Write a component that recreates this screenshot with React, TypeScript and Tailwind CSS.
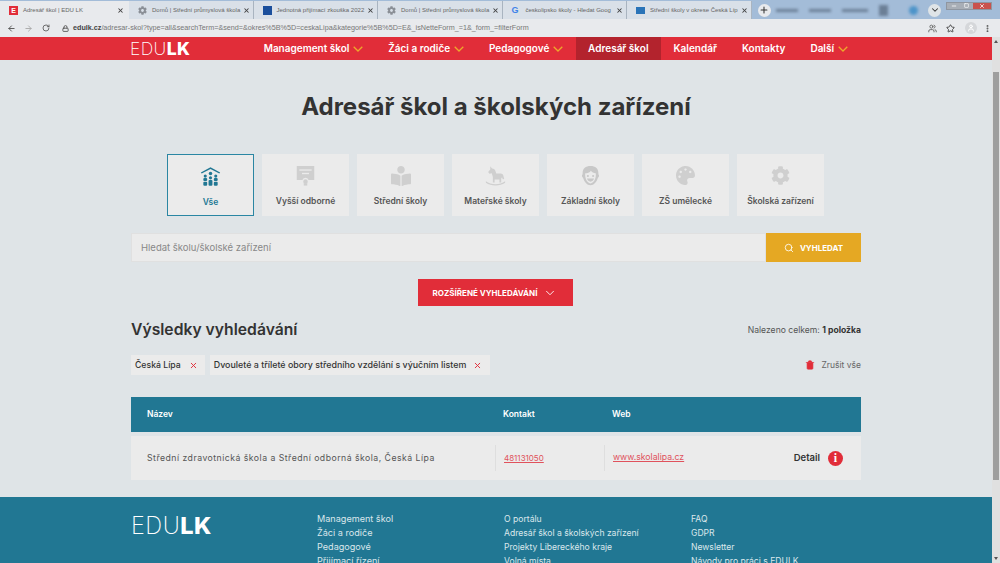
import React from 'react';
import { ArrowLeft, ArrowRight, RotateCw, Lock, Star, X, Plus, ChevronDown, Search, Trash2, MoreVertical, User, Minus, Square, Users } from 'lucide-react';
import { FaPalette, FaCog, FaBookReader } from 'react-icons/fa';

const tabs = [
  { title: 'Adresář škol | EDU LK', icon: 'e', active: true },
  { title: 'Domů | Střední průmyslová škola', icon: 'gear' },
  { title: 'Jednotná přijímací zkouška 2022', icon: 'blue' },
  { title: 'Domů | Střední průmyslová škola', icon: 'gear' },
  { title: 'českolipsko školy - Hledat Goog', icon: 'g' },
  { title: 'Střední školy v okrese Česká Líp', icon: 'sk' },
];

const navItems = [
  { label: 'Management škol', arrow: true },
  { label: 'Žáci a rodiče', arrow: true },
  { label: 'Pedagogové', arrow: true },
  { label: 'Adresář škol', active: true },
  { label: 'Kalendář' },
  { label: 'Kontakty' },
  { label: 'Další', arrow: true },
];

function HouseIcon() {
  return (
    <svg viewBox="0 0 24 24" className="h-[21px] w-[21px]" fill="#217793">
      <path d="M12 1.500 1 7.400l.9 1.300L12 3.500l10.100 5.200.9-1.300z" />
      <circle cx="12" cy="8.500" r="2" />
      <circle cx="6" cy="11.500" r="1.800" />
      <circle cx="18" cy="11.500" r="1.800" />
      <circle cx="12" cy="13.500" r="1.800" />
      <rect x="3.800" y="13.800" width="4.400" height="3.400" rx="1.200" />
      <rect x="15.800" y="13.800" width="4.400" height="3.400" rx="1.200" />
      <rect x="3.800" y="18" width="4.400" height="4.500" rx="1.200" />
      <rect x="9.800" y="16" width="4.400" height="6.500" rx="1.200" />
      <rect x="15.800" y="18" width="4.400" height="4.500" rx="1.200" />
    </svg>
  );
}

function CertificateIcon() {
  return (
    <svg viewBox="0 0 24 24" className="h-[21px] w-[21px]" fill="#cfcfcf">
      <path d="M2 1h20v16h-6.500a3.800 3.800 0 0 0-7 0H2z" />
      <rect x="5" y="5" width="14" height="1.500" fill="#ebebeb" />
      <rect x="8" y="9" width="8" height="1.500" fill="#ebebeb" />
      <circle cx="12" cy="19" r="2.600" />
      <path d="M10 21h4v2.500h-4z" />
    </svg>
  );
}

function HorseIcon() {
  return (
    <svg viewBox="0 0 24 24" className="h-[21px] w-[21px]" fill="#cfcfcf">
      <path d="M6 1.500 8 4c2.200.2 3.400 1.200 4 3l.8 2.600h5c2 0 3.200 1.200 3.400 3.400l.8 3-1.700.4-.8-2.400-1 1.400V20h-2v-3.500H11V20H9v-6.200L7.700 9.500l-2.700.5L3.600 8l2.400-3z" />
      <path d="M1 18.500c6 4.600 16 4.600 22 0v1.800c-6 4-16 4-22 0z" />
    </svg>
  );
}

function FaceIcon() {
  return (
    <svg viewBox="0 0 24 24" className="h-[21px] w-[21px]" fill="#c8c8c8">
      <path d="M12 1C6.500 1 3 4 3 9v1.500C1.800 11 2 14 3.500 14.500 5 19.500 8 23 12 23s7-3.500 8.500-8.500C22 14 22.200 11 21 10.500V9c0-5-3.500-8-9-8zM6 9.500c2.500 0 5-1 6.500-3 1 1.600 3 2.800 5.500 3 .8 5-2 11.500-6 11.500S5.300 14.500 6 9.500z" />
      <circle cx="9" cy="12.500" r="1.200" />
      <circle cx="15" cy="12.500" r="1.200" />
      <path d="M8 15.500h8c-.5 2.200-2 3.500-4 3.500s-3.500-1.300-4-3.500z" />
    </svg>
  );
}

const categories = [
  { label: 'Vše', icon: <HouseIcon />, active: true },
  { label: 'Vyšší odborné', icon: <CertificateIcon /> },
  { label: 'Střední školy', icon: <FaBookReader className="h-[20px] w-[20px] text-[#cfcfcf]" /> },
  { label: 'Mateřské školy', icon: <HorseIcon /> },
  { label: 'Základní školy', icon: <FaceIcon /> },
  { label: 'ZŠ umělecké', icon: <FaPalette className="h-[19px] w-[19px] text-[#cfcfcf]" /> },
  { label: 'Školská zařízení', icon: <FaCog className="h-[19px] w-[19px] text-[#cfcfcf]" /> },
];

const footerCols = [
  { width: 'w-[187px] text-[9.100px]', items: ['Management škol', 'Žáci a rodiče', 'Pedagogové', 'Přijímací řízení'] },
  { width: 'w-[187px] text-[8.600px]', items: ['O portálu', 'Adresář škol a školských zařízení', 'Projekty Libereckého kraje', 'Volná místa'] },
  { width: 'text-[8.600px]', items: ['FAQ', 'GDPR', 'Newsletter', 'Návody pro práci s EDULK'] },
];

function Favicon({ type }: { type: string }) {
  if (type === 'e') {
    return <span className="flex h-[9px] w-[9px] shrink-0 items-center justify-center bg-[#e12d39] text-[7px] font-bold leading-none text-white">E</span>;
  }
  if (type === 'gear') return <FaCog className="h-[9px] w-[9px] shrink-0 text-[#8a8f96]" />;
  if (type === 'blue') return <span className="h-[9px] w-[9px] shrink-0 bg-[#1b4f9c]" />;
  if (type === 'g') return <span className="w-[9px] shrink-0 text-[9px] font-bold leading-none text-[#3f83e8]">G</span>;
  return <span className="h-[7px] w-[9px] shrink-0 bg-[#2a74b8]" />;
}

function Logo({ size }: { size: string }) {
  return (
    <span className={`${size} leading-none tracking-[0.02em] text-white`}>
      <span className="font-extralight">EDU</span>
      <span className="font-extrabold">LK</span>
    </span>
  );
}

function Chevron() {
  return (
    <svg viewBox="0 0 10 6" className="ml-[3.800px] h-[6px] w-[10px]" fill="none" stroke="#eda92b" strokeWidth="1.300">
      <path d="M.7.8 5 5 9.300.8" />
    </svg>
  );
}

export default function App() {
  return (
    <div className="flex h-[563px] w-[1000px] flex-col overflow-hidden bg-[#dfe4e7] font-['Inter',sans-serif]">
      {/* browser */}
      <div className="flex h-[19px] items-end bg-[#a3bcd8] font-['Liberation_Sans',sans-serif]">
        {tabs.map((t) => (
          <div
            key={t.title + t.icon}
            className={`flex h-[18px] shrink-0 items-center pl-[9px] ${t.active ? 'w-[129px] bg-[#e8eaed] pr-[5px]' : 'w-[124.500px] border-r border-[#a9b4c0] bg-[#d9e0e8] pr-[3px]'}`}
          >
            <Favicon type={t.icon} />
            <span className="ml-[5px] min-w-0 flex-1 whitespace-nowrap text-[6px] text-[#666]">{t.title}</span>
            <X className="h-[7px] w-[7px] shrink-0 text-[#444]" strokeWidth={3.500} />
          </div>
        ))}
        <div className="ml-[6px] flex h-[18px] flex-1 items-center">
          <span className="flex h-[13px] w-[13px] items-center justify-center rounded-full bg-[#e8eaed]">
            <Plus className="h-[10px] w-[10px] text-[#333]" strokeWidth={2.500} />
          </span>
          <div className="ml-[5px] flex items-center gap-[11px] blur-[1.500px]">
            <span className="h-[3px] w-[22px] bg-[#6b7f96]" />
            <span className="h-[3px] w-[22px] bg-[#6b7f96]" />
            <span className="h-[3px] w-[26px] bg-[#6b7f96]" />
            <span className="h-[11px] w-[9px] bg-[#6b7f96]" />
            <span className="ml-[10px] h-[9px] w-[9px] rounded-full bg-[#4d94c9]" />
          </div>
          <span className="ml-auto flex h-[13px] w-[13px] items-center justify-center rounded-full bg-[#dfe4e7]">
            <ChevronDown className="h-[10px] w-[10px] text-[#333]" strokeWidth={2.500} />
          </span>
          <div className="mb-[9px] ml-[5px] mr-[8px] flex h-[8px] w-[46px] items-center border border-[#8f96a0] bg-[#a8aeb6]">
            <span className="flex flex-1 justify-center"><Minus className="h-[6px] w-[6px] text-white" strokeWidth={3} /></span>
            <span className="flex flex-1 justify-center"><Square className="h-[5px] w-[5px] text-white" strokeWidth={3} /></span>
            <span className="flex h-full w-[18px] items-center justify-center bg-[#c9524c]"><X className="h-[6px] w-[6px] text-white" strokeWidth={3} /></span>
          </div>
        </div>
      </div>
      <div className="flex h-[18px] items-center bg-[#e8eaed] pl-[7px] pr-[8px] font-['Liberation_Sans',sans-serif]">
        <ArrowLeft className="h-[9px] w-[9px] text-[#555]" strokeWidth={2.500} />
        <ArrowRight className="ml-[8px] h-[9px] w-[9px] text-[#aaa]" strokeWidth={2.500} />
        <RotateCw className="ml-[9px] h-[8px] w-[8px] text-[#555]" strokeWidth={2.500} />
        <Lock className="ml-[12px] h-[7px] w-[7px] text-[#555]" strokeWidth={3} />
        <span className="ml-[4px] whitespace-nowrap text-[7.200px] text-[#777]">
          <span className="font-bold text-[#444]">edulk.cz</span>
          /adresar-skol?type=all&amp;searchTerm=&amp;send=&amp;okres%5B%5D=ceskaLipa&amp;kategorie%5B%5D=E&amp;_isNetteForm_=1&amp;_form_=filterForm
        </span>
        <Users className="ml-auto h-[9px] w-[9px] text-[#666]" strokeWidth={2.500} />
        <Star className="ml-[9px] h-[9px] w-[9px] text-[#444]" strokeWidth={2.500} />
        <span className="ml-[10px] flex h-[12px] w-[12px] items-center justify-center rounded-full bg-[#d5d7da]">
          <User className="h-[8px] w-[8px] text-white" strokeWidth={3} />
        </span>
        <MoreVertical className="ml-[6px] h-[9px] w-[9px] text-[#555]" strokeWidth={3} />
      </div>

      <div className="flex min-h-0 flex-1">
        <div className="w-[992px] shrink-0">
          {/* nav */}
          <div className="flex h-[23px] items-center bg-[#e12d39] pl-[130px]">
            <Logo size="text-[17.500px]" />
            <div className="ml-[61px] flex h-full items-stretch">
              {navItems.map((n) => (
                <div
                  key={n.label}
                  className={`flex items-center whitespace-nowrap px-[12.500px] text-[10px] font-semibold text-white ${n.active ? 'bg-[#b3232d]' : ''}`}
                >
                  {n.label}
                  {n.arrow && <Chevron />}
                </div>
              ))}
            </div>
          </div>

          <h1 className="mt-[34px] text-center text-[24px] leading-[26px] font-bold text-[#333]">Adresář škol a školských zařízení</h1>

          <div className="mx-auto mt-[34px] w-[730px]">
            <div className="flex justify-between pl-[36px] pr-[37px]">
              {categories.map((c) => (
                <div
                  key={c.label}
                  className={`flex h-[62px] w-[87px] flex-col items-center bg-[#ebebeb] pt-[10px] ${c.active ? 'border border-[#2a86a3]' : ''}`}
                >
                  <span className="flex h-[23px] items-center">{c.icon}</span>
                  <span className={`mt-[8px] whitespace-nowrap text-[8.500px] font-semibold ${c.active ? 'text-[#217793]' : 'text-[#555]'}`}>{c.label}</span>
                </div>
              ))}
            </div>

            <div className="mt-[17px] flex h-[29px]">
              <div className="flex flex-1 items-center border border-[#e0e0e0] bg-[#ebebeb] pl-[9px] pt-[1px] text-[9.500px] text-[#888]">Hledat školu/školské zařízení</div>
              <div className="flex w-[95px] items-center justify-center gap-[6px] bg-[#e5a823] text-[8px] font-bold text-white">
                <Search className="h-[10px] w-[10px]" strokeWidth={2} />
                VYHLEDAT
              </div>
            </div>

            <div className="mt-[17px] flex justify-center pr-[2px]">
              <div className="flex h-[27px] w-[155px] items-center justify-center gap-[6px] bg-[#e12d39] text-[8px] font-bold text-white">
                ROZŠÍŘENÉ VYHLEDÁVÁNÍ
                <ChevronDown className="h-[14px] w-[14px]" strokeWidth={1.500} />
              </div>
            </div>

            <div className="mt-[13px] flex items-center justify-between">
              <h2 className="text-[15.700px] leading-[22px] font-semibold text-[#333]">Výsledky vyhledávání</h2>
              <span className="text-[8.600px] text-[#555]">Nalezeno celkem: <b className="font-bold text-[#333]">1 položka</b></span>
            </div>

            <div className="mt-[14px] flex items-center">
              <div className="flex h-[20px] items-center gap-[8px] bg-[#ebebeb] pl-[4px] pr-[7px] pt-[1px] text-[8.700px] font-medium text-[#333]">
                Česká Lípa <X className="h-[9px] w-[9px] text-[#e12d39]" strokeWidth={2.500} />
              </div>
              <div className="ml-[5px] flex h-[20px] items-center gap-[7px] bg-[#ebebeb] pl-[4px] pr-[8px] text-[8.900px] font-medium text-[#333]">
                Dvouleté a tříleté obory středního vzdělání s výučním listem <X className="h-[9px] w-[9px] text-[#e12d39]" strokeWidth={2.500} />
              </div>
              <div className="ml-auto flex items-center gap-[6px] text-[8.500px] text-[#666]">
                <Trash2 className="h-[10px] w-[10px] text-[#e12d39]" fill="#e12d39" strokeWidth={1.500} />
                Zrušit vše
              </div>
            </div>

            <div className="mt-[22px] flex h-[35px] items-center bg-[#217793] text-[8.500px] font-semibold text-white">
              <span className="w-[372px] pl-[16px]">Název</span>
              <span className="w-[109px]">Kontakt</span>
              <span>Web</span>
            </div>

            <div className="mt-[4px] flex h-[44px] items-center bg-[#ebebeb] text-[8.700px] text-[#555]">
              <span className="w-[364px] whitespace-nowrap pl-[16px] pt-[1px] tracking-[0.48px]">Střední zdravotnická škola a Střední odborná škola, Česká Lípa</span>
              <span className="flex h-[26px] w-[109px] items-center border-l border-[#dedede] pl-[8px] text-[8px] text-[#e0525c] underline">481131050</span>
              <span className="flex h-[26px] flex-1 items-center border-l border-[#dedede] pl-[8px] text-[#e0525c] underline">www.skolalipa.cz</span>
              <span className="mr-[18px] flex items-center gap-[8px] text-[9.500px] font-semibold text-[#333]">
                Detail
                <span className="flex h-[15px] w-[15px] items-center justify-center rounded-full bg-[#e12d39] font-['Liberation_Serif',serif] text-[12px] font-bold leading-none text-white">i</span>
              </span>
            </div>
          </div>

          {/* footer */}
          <div className="mt-[17px] h-[66px] bg-[#217793]">
            <div className="mx-auto flex w-[730px] pt-[15px]">
              <div className="w-[186px] pt-[2px]">
                <Logo size="text-[23.500px]" />
              </div>
              {footerCols.map((col) => (
                <div key={col.items[0]} className={col.width}>
                  {col.items.map((item) => (
                    <div key={item} className="h-[14px] whitespace-nowrap leading-[14px] text-[#dbe7ec]">{item}</div>
                  ))}
                </div>
              ))}
            </div>
          </div>
        </div>

        {/* scrollbar */}
        <div className="flex w-[8px] flex-col items-center bg-[#e0e0e0] pt-[3px]">
          <span className="h-0 w-0 border-x-[2.500px] border-b-[3px] border-x-transparent border-b-[#555]" />
          <span className="mt-[29px] h-[408px] w-[6px] bg-[#9e9e9e]" />
          <span className="mt-auto mb-[3px] h-0 w-0 border-x-[2.500px] border-t-[3px] border-x-transparent border-t-[#555]" />
        </div>
      </div>
    </div>
  );
}
